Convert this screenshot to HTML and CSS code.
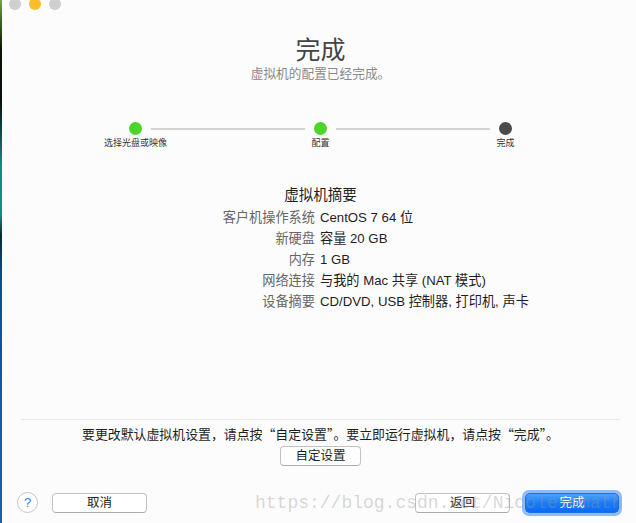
FILE: index.html
```html
<!DOCTYPE html>
<html lang="zh-CN">
<head>
<meta charset="utf-8">
<title>完成</title>
<link rel="stylesheet" href="styles.css">
</head>
<body>
<div class="window">
  <div class="strip"></div>
  <div class="main">
    <div class="lights">
      <span class="light gray"></span>
      <span class="light yellow"></span>
      <span class="light gray"></span>
    </div>
    <h1 class="title">完成</h1>
    <p class="subtitle">虚拟机的配置已经完成。</p>

    <div class="steps">
      <div class="step"><span class="dot done"></span><span class="step-label">选择光盘或映像</span></div>
      <div class="step-line"></div>
      <div class="step"><span class="dot done"></span><span class="step-label">配置</span></div>
      <div class="step-line"></div>
      <div class="step"><span class="dot current"></span><span class="step-label">完成</span></div>
    </div>

    <h2 class="summary-title">虚拟机摘要</h2>
    <div class="summary">
      <span class="label">客户机操作系统</span><span class="value">CentOS 7 64 位</span>
      <span class="label">新硬盘</span><span class="value">容量 20 GB</span>
      <span class="label">内存</span><span class="value">1 GB</span>
      <span class="label">网络连接</span><span class="value">与我的 Mac 共享 (NAT 模式)</span>
      <span class="label">设备摘要</span><span class="value">CD/DVD, USB 控制器, 打印机, 声卡</span>
    </div>

    <div class="spacer"></div>
    <div class="separator"></div>
    <p class="note">要更改默认虚拟机设置，请点按“自定设置”。要立即运行虚拟机，请点按“完成”。</p>
    <div class="custom-row"><button class="btn custom">自定设置</button></div>

    <div class="footer">
      <span class="help">?</span>
      <button class="btn cancel">取消</button>
      <div class="footer-gap"></div>
      <button class="btn back">返回</button>
      <button class="btn primary">完成</button>
    </div>
  </div>
  <div class="watermark">https://blog.csdn.net/Nicolelomath</div>
</div>
</body>
</html>
```

FILE: styles.css
```css
* { box-sizing: border-box; }
html, body { margin: 0; padding: 0; }
body {
  font-family: "Liberation Sans", "Noto Sans CJK SC", sans-serif;
  background: #fcfcfc;
}
.window {
  position: relative;
  width: 636px;
  height: 523px;
  overflow: hidden;
  display: flex;
  background: #fcfcfc;
}
.strip {
  flex: 0 0 2px;
  background: linear-gradient(to bottom, #7aa83a 0, #3f6a1e 20px, #0b1208 50px, #0a0f0c 100px, #128a88 165px, #109080 215px, #0b2a2c 235px, #0a4d96 275px, #0c5cb0 400px, #1462b4 523px);
}
.main {
  flex: 0 0 637px;
  display: flex;
  flex-direction: column;
  height: 523px;
}
.lights {
  display: flex;
  gap: 8px;
  margin-top: -2px;
  padding-left: 7px;
  height: 12px;
}
.light {
  width: 12px;
  height: 12px;
  border-radius: 50%;
  display: block;
}
.light.gray { background: #cfcfcf; }
.light.yellow { background: #fbbd2c; }

.title {
  margin: 26px 0 0;
  text-align: center;
  font-family: "Liberation Sans", "Noto Sans CJK SC", sans-serif;
  font-size: 25px;
  font-weight: 400;
  line-height: 28px;
  color: #444;
}
.subtitle {
  margin: 2px 0 0;
  text-align: center;
  font-family: "Liberation Sans", "Noto Sans CJK SC", sans-serif;
  font-size: 12.7px;
  line-height: 16px;
  color: #8a8a8a;
}

.steps {
  display: flex;
  align-items: flex-start;
  width: 383px;
  margin: 40px auto 0;
}
.step {
  flex: 0 0 13px;
  width: 13px;
  min-width: 0;
  display: flex;
  flex-direction: column;
  align-items: center;
}
.dot {
  width: 13px;
  height: 13px;
  border-radius: 50%;
  display: block;
  flex: none;
}
.dot.done { background: #4cd52b; }
.dot.current { background: #4a4a4a; }
.step-label {
  margin-top: 2px;
  font-size: 9px;
  line-height: 12px;
  color: #333;
  white-space: nowrap;
  flex: none;
}
.step-line {
  flex: 1;
  height: 2px;
  margin: 5.5px 9px 0;
  background: #d4d4d4;
}

.summary-title {
  margin: 36px 0 0;
  text-align: center;
  font-size: 14.5px;
  font-weight: 400;
  line-height: 20px;
  color: #1e1e1e;
}
.summary {
  display: grid;
  grid-template-columns: 313px 1fr;
  column-gap: 5px;
  margin-top: 2px;
  font-size: 13.2px;
  line-height: 21px;
}
.label { text-align: right; color: #666; white-space: nowrap; }
.value { color: #1e1e1e; white-space: nowrap; }

.spacer { flex: 1; }
.separator {
  height: 1px;
  margin: 0 19px;
  background: #e9e9e9;
}
.note {
  margin: 6px 0 0;
  text-align: center;
  font-family: "Noto Sans CJK SC", sans-serif;
  font-size: 12.9px;
  line-height: 16px;
  color: #1e1e1e;
}
.custom-row {
  display: flex;
  justify-content: center;
  margin-top: 4px;
}
.btn {
  font-family: "Liberation Sans", "Noto Sans CJK SC", sans-serif;
  font-size: 12.5px;
  line-height: 18px;
  height: 20px;
  padding: 0;
  border: 1px solid #c2c2c2;
  border-bottom-color: #adadad;
  border-radius: 4px;
  background: #fff;
  color: #1e1e1e;
}
.custom { width: 81px; }

.footer {
  display: flex;
  align-items: center;
  margin-top: 26px;
  margin-bottom: 10px;
  padding: 0 20px 0 15px;
}
.help {
  width: 21px;
  height: 21px;
  border-radius: 50%;
  border: 1px solid #c4c4c4;
  background: #fff;
  color: #2f7ff2;
  font-size: 13px;
  line-height: 19px;
  text-align: center;
}
.cancel { width: 95px; margin-left: 14px; }
.footer-gap { flex: 1; }
.back { width: 95px; }
.primary {
  width: 94px;
  margin-left: 15px;
  border: 1px solid #1a6ee8;
  background: linear-gradient(to bottom, #4ea2fd, #1a7cf8 50%, #0a6af3);
  color: #fff;
  box-shadow: 0 0 0 3px rgba(110, 165, 245, 0.75);
}

.watermark {
  position: absolute;
  left: 255px;
  top: 493px;
  font-family: "Liberation Mono", monospace;
  font-size: 18px;
  line-height: 20px;
  color: rgba(150, 150, 150, 0.38);
  white-space: nowrap;
  pointer-events: none;
}
```
